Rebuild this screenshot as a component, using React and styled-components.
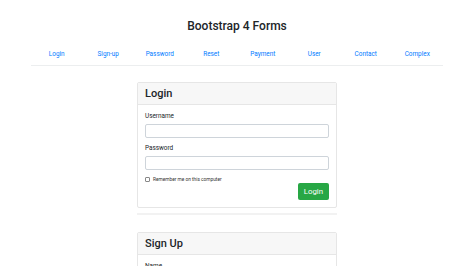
import styled, { createGlobalStyle } from "styled-components";

const GlobalStyle = createGlobalStyle`
  * { box-sizing: border-box; }
  body {
    margin: 0;
    background: #fff;
    font-family: "Roboto", "Liberation Sans", sans-serif;
    color: #212529;
  }
`;

const Page = styled.div`
  width: 474px;
  height: 266px;
  overflow: hidden;
  padding-top: 17px;
`;

const Title = styled.h1`
  margin: 0;
  text-align: center;
  font-size: 12px;
  font-weight: 500;
  line-height: 18px;
  color: #212529;
`;

const Nav = styled.nav`
  display: flex;
  margin: 15px 31px 0;
  padding-bottom: 6px;
  border-bottom: 1px solid #eceeef;
`;

const NavLink = styled.a`
  flex: 1;
  text-align: center;
  font-size: 6.4px;
  line-height: 9px;
  color: #007bff;
  text-decoration: none;
`;

const Card = styled.section`
  width: 200px;
  margin: ${(p) => p.$top}px auto 0;
  border: 1px solid #e6e6e6;
  border-radius: 2px;
  background: #fff;
`;

const CardHeader = styled.div`
  height: 22px;
  display: flex;
  align-items: center;
  padding: 0 7px;
  background: #f7f7f7;
  border-bottom: 1px solid #e6e6e6;
  font-size: 11px;
  font-weight: 500;
`;

const CardBody = styled.div`
  padding: 7px 7px 7px;
`;

const Label = styled.label`
  display: block;
  font-size: 6.4px;
  line-height: 9px;
  margin-bottom: 3px;
`;

const Input = styled.input`
  display: block;
  width: 100%;
  height: 14px;
  border: 1px solid #ced4da;
  border-radius: 2px;
  margin-bottom: 6px;
`;

const Check = styled.label`
  display: flex;
  align-items: center;
  gap: 3px;
  font-size: 4.8px;
  color: #333;
`;

const Box = styled.span`
  width: 5px;
  height: 5px;
  border: 0.6px solid #888;
  border-radius: 1px;
  margin-top: 1px;
`;

const Actions = styled.div`
  display: flex;
  justify-content: flex-end;
  margin-top: 1px;
`;

const Button = styled.button`
  height: 17px;
  padding: 0 6px;
  border: none;
  border-radius: 2px;
  background: #28a745;
  color: #fff;
  font-family: inherit;
  font-size: 7.8px;
`;

const Rule = styled.div`
  width: 200px;
  height: 2px;
  margin: 5px auto 0;
  background: #f2f2f2;
`;

const links = ["Login", "Sign-up", "Password", "Reset", "Payment", "User", "Contact", "Complex"];

export default function App() {
  return (
    <Page>
      <GlobalStyle />
      <Title>Bootstrap 4 Forms</Title>
      <Nav>
        {links.map((l) => (
          <NavLink key={l} href="#">{l}</NavLink>
        ))}
      </Nav>
      <Card $top={16}>
        <CardHeader>Login</CardHeader>
        <CardBody>
          <Label>Username</Label>
          <Input />
          <Label>Password</Label>
          <Input />
          <Check>
            <Box />
            Remember me on this computer
          </Check>
          <Actions>
            <Button>Login</Button>
          </Actions>
        </CardBody>
      </Card>
      <Rule />
      <Card $top={17}>
        <CardHeader>Sign Up</CardHeader>
        <CardBody>
          <Label>Name</Label>
          <Input />
        </CardBody>
      </Card>
    </Page>
  );
}
